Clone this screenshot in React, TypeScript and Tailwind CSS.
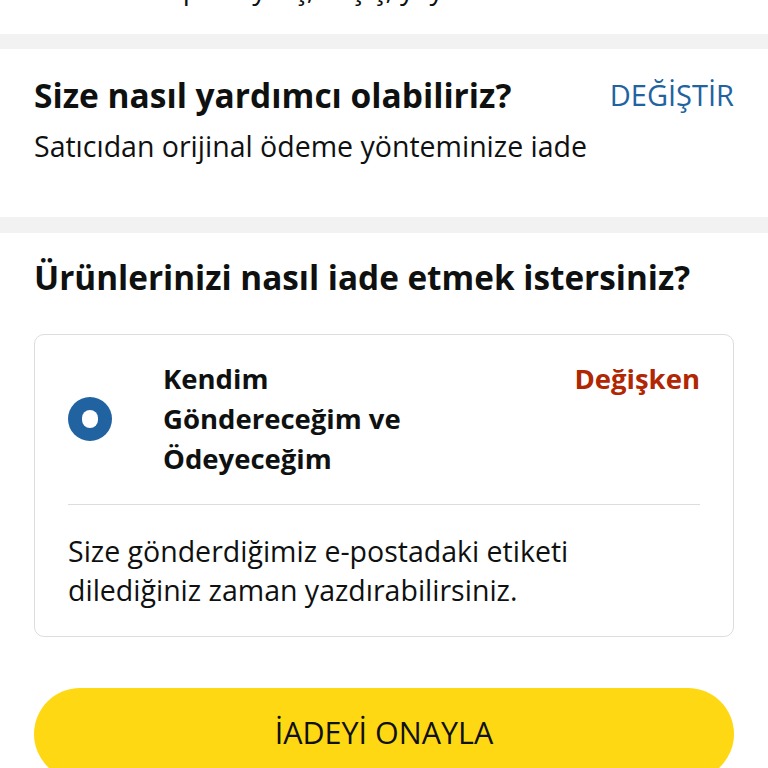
export default function App() {
    return (
        <div className="w-[768px] h-[768px] overflow-hidden bg-white font-['Open_Sans',sans-serif] text-[#0f1111]">
            {/* üstte kesilmiş satır */}
            <div className="h-[34px] overflow-hidden">
                <p className="pl-[150px] text-[28px] leading-[30px] -mt-[27px]">
                    Kapalı ayraç, kaşıç, yayı
                </p>
            </div>
            <div className="h-[15px] bg-[#f2f2f2]" />

            {/* yardım bölümü */}
            <section className="px-[34px] pt-[26px] h-[168px]">
                <div className="flex items-start justify-between">
                    <h2 className="text-[33.5px] leading-[40px] font-bold">Size nasıl yardımcı olabiliriz?</h2>
                    <button className="text-[29px] leading-[40px] text-[#2162a1]">DEĞİŞTİR</button>
                </div>
                <p className="mt-[12px] text-[28.5px] leading-[38px]">Satıcıdan orijinal ödeme yönteminize iade</p>
            </section>
            <div className="h-[16px] bg-[#f2f2f2]" />

            {/* iade yöntemi */}
            <section className="px-[34px] pt-[23px]">
                <h2 className="text-[33.3px] leading-[42px] font-bold">Ürünlerinizi nasıl iade etmek istersiniz?</h2>
                <div className="mt-[36px] border border-[#dddddd] rounded-[10px] px-[33px] pt-[24px]">
                    <div className="flex items-center pb-[25px] border-b border-[#dddddd]">
                        <div className="w-[44px] h-[44px] rounded-full bg-[#2162a1] flex items-center justify-center shrink-0">
                            <div className="w-[16px] h-[18px] rounded-full bg-white" />
                        </div>
                        <div className="ml-[51px] flex-1 flex items-start justify-between">
                            <p className="text-[27.5px] leading-[40px] font-bold w-[260px]">
                                Kendim Göndereceğim ve Ödeyeceğim
                            </p>
                            <span className="text-[27.5px] leading-[40px] font-bold text-[#b12704]">Değişken</span>
                        </div>
                    </div>
                    <p className="pt-[27px] pb-[26px] text-[28.5px] leading-[39px]">
                        Size gönderdiğimiz e-postadaki etiketi
                        <br />
                        dilediğiniz zaman yazdırabilirsiniz.
                    </p>
                </div>
                <button className="mt-[51px] w-full h-[92px] rounded-full bg-[#ffd814] text-[30.5px] text-[#0f1111] pb-[2px]">
                    İADEYİ ONAYLA
                </button>
            </section>
        </div>
    );
}
